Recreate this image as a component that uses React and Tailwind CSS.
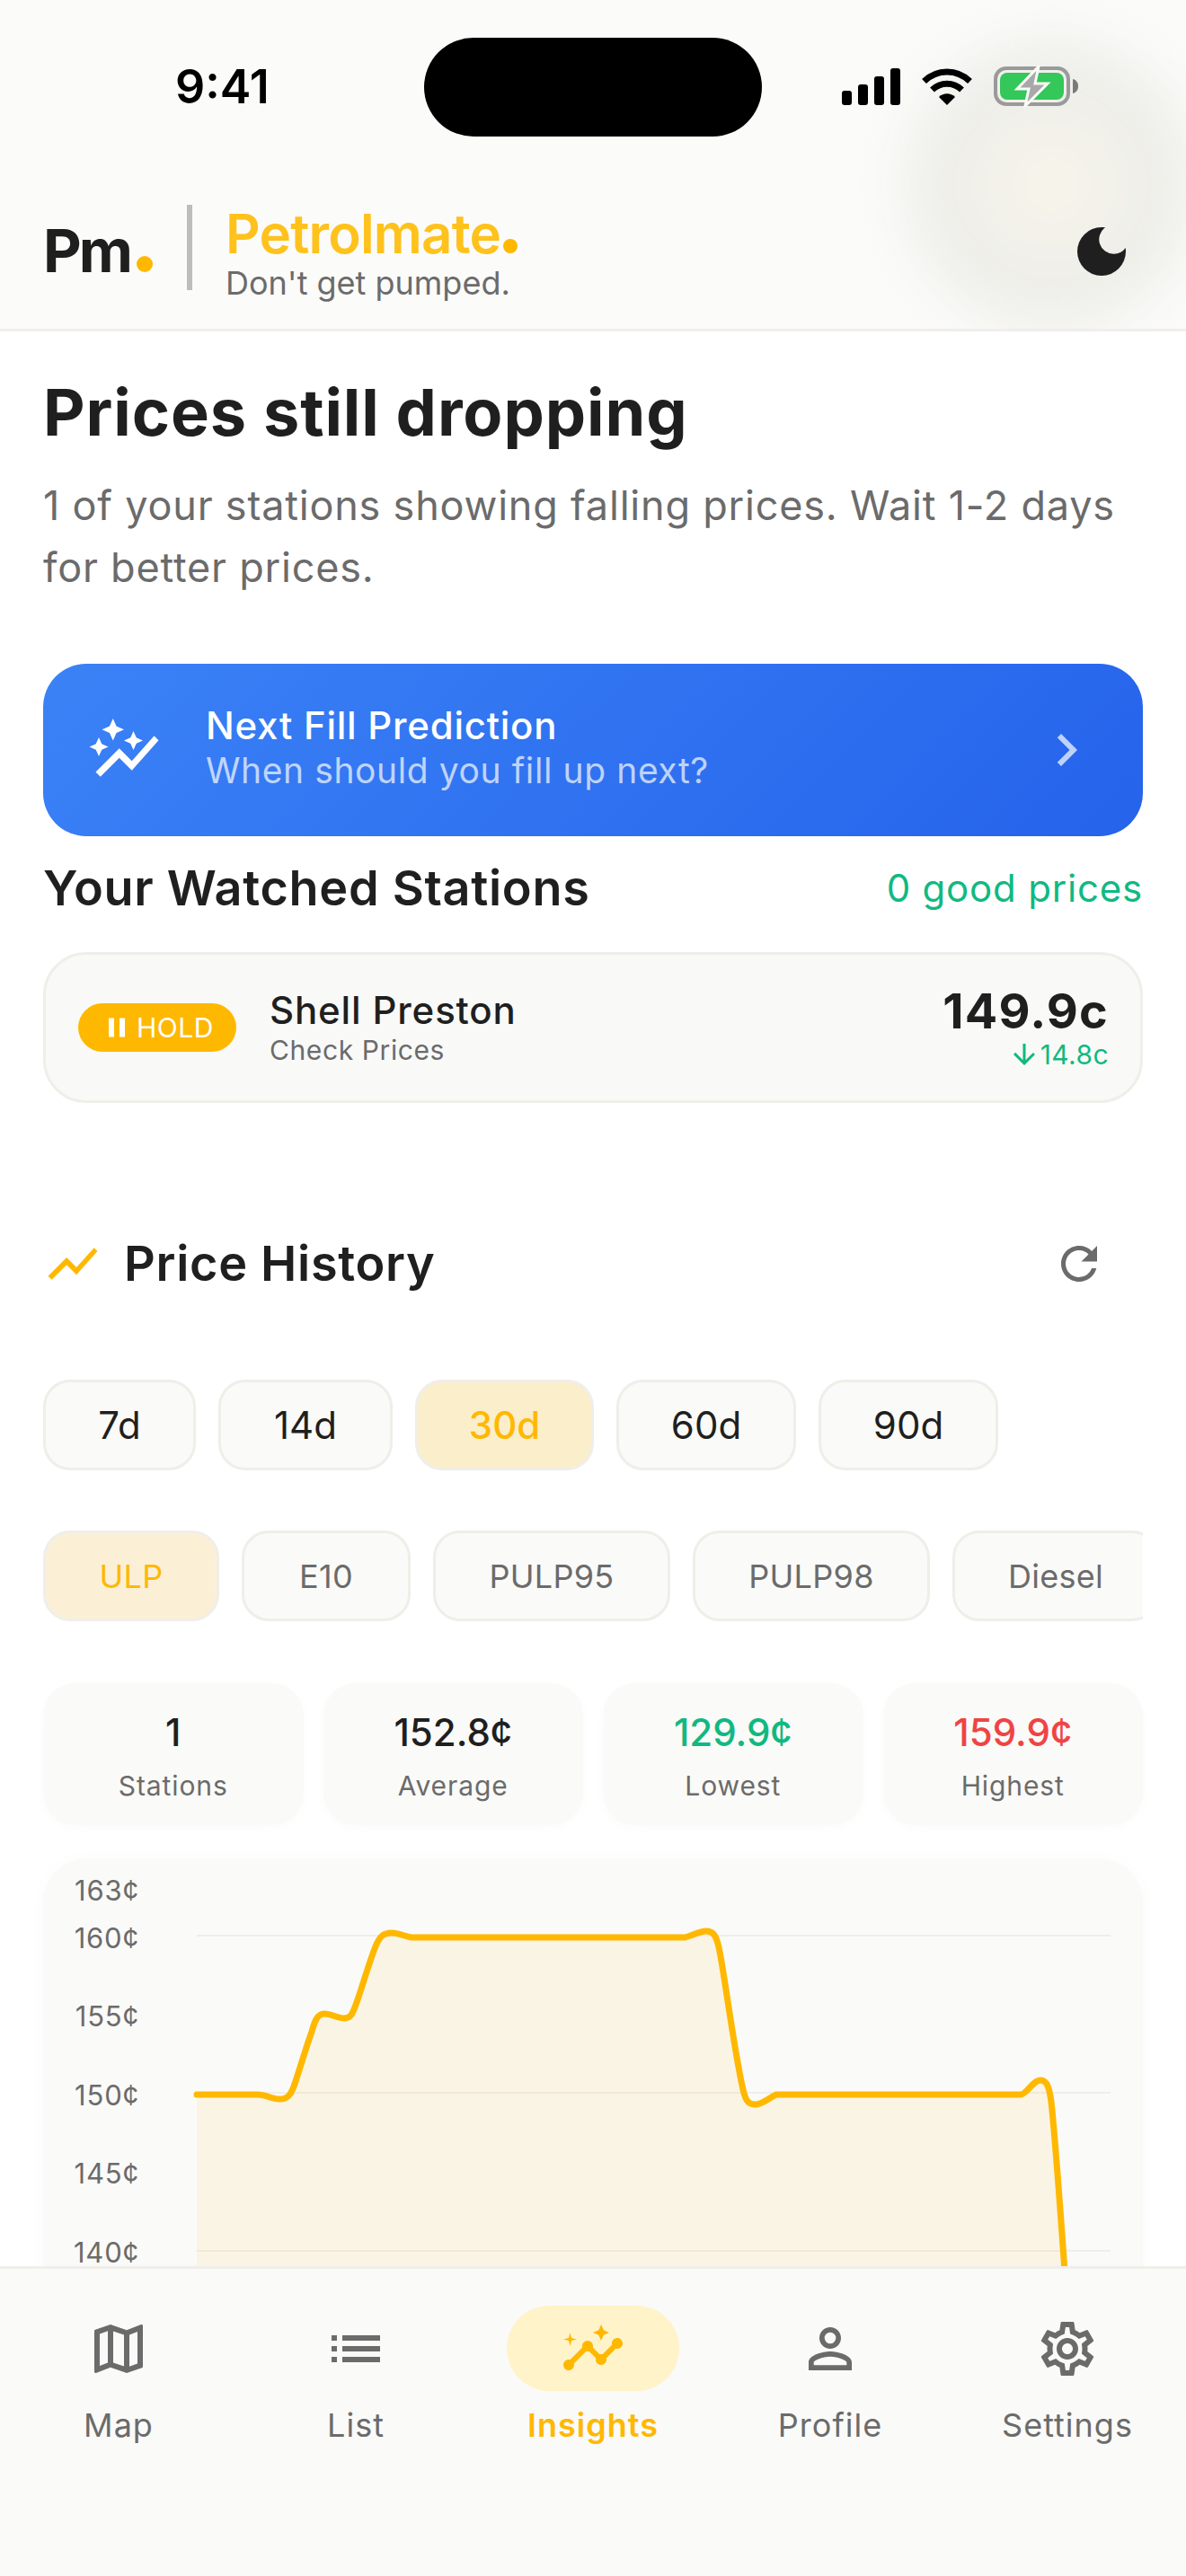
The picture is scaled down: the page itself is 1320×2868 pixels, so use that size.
import React from 'react'
import {
  MdArrowDownward,
  MdAutoGraph,
  MdChevronRight,
  MdDarkMode,
  MdInsights,
  MdList,
  MdOutlineMap,
  MdOutlineSettings,
  MdPause,
  MdPersonOutline,
  MdRefresh,
  MdShowChart,
} from 'react-icons/md'

const periods = [
  { label: '7d', w: 'w-[170px]' },
  { label: '14d', w: 'w-[194px]' },
  { label: '30d', w: 'w-[199px]', active: true },
  { label: '60d', w: 'w-[200px]' },
  { label: '90d', w: 'w-[200px]' },
]

const fuels = [
  { label: 'ULP', w: 'w-[196px]', active: true },
  { label: 'E10', w: 'w-[188px]' },
  { label: 'PULP95', w: 'w-[264px]' },
  { label: 'PULP98', w: 'w-[264px]' },
  { label: 'Diesel', w: 'w-[230px]' },
]

const stats = [
  { value: '1', label: 'Stations', color: 'text-[#1f1f1f]' },
  { value: '152.8¢', label: 'Average', color: 'text-[#1f1f1f]' },
  { value: '129.9¢', label: 'Lowest', color: 'text-[#10b981]' },
  { value: '159.9¢', label: 'Highest', color: 'text-[#ef4444]' },
]

const axis = [
  { label: '163¢', y: 2105 },
  { label: '160¢', y: 2158 },
  { label: '155¢', y: 2245 },
  { label: '150¢', y: 2333 },
  { label: '145¢', y: 2420 },
  { label: '140¢', y: 2508 },
]

const linePath =
  'M219 2332 L287 2332 C296 2332 302 2337 311 2337 C320 2337 323 2333 327 2323 C333 2306 341 2278 347 2262 C350 2251 353 2242 361 2242 C368 2242 376 2247 383 2247 C390 2247 392 2243 396 2232 C402 2216 411 2184 418 2167 C422 2157 426 2152 436 2152 C444 2152 450 2156 458 2157 L761 2157 C768 2157 777 2150 786 2150 C794 2150 797 2155 800 2168 C806 2195 815 2270 826 2322 C829 2337 832 2343 840 2343 C849 2343 855 2336 864 2332 L1136 2332 C1142 2332 1150 2316 1158 2316 C1166 2316 1168 2326 1170 2340 C1175 2385 1181 2470 1190 2600'

const tabs = [
  { label: 'Map', Icon: MdOutlineMap },
  { label: 'List', Icon: MdList },
  { label: 'Insights', Icon: MdInsights, active: true },
  { label: 'Profile', Icon: MdPersonOutline },
  { label: 'Settings', Icon: MdOutlineSettings },
]

const StatusIcons = () => (
  <div className="flex items-center">
    <svg width="65" height="41" viewBox="0 0 65 41" className="mt-[-2px]">
      <rect x="0" y="25" width="11" height="16" rx="3" fill="#000" />
      <rect x="18" y="18" width="11" height="23" rx="3" fill="#000" />
      <rect x="36" y="9" width="11" height="32" rx="3" fill="#000" />
      <rect x="54" y="0" width="11" height="41" rx="3" fill="#000" />
    </svg>
    <svg width="58" height="42" viewBox="0 0 58 42" className="ml-[23px] mt-[-2px]">
      <path d="M3.5 15.5 C18 1.5 40 1.5 54.5 15.5" fill="none" stroke="#000" strokeWidth="7" />
      <path d="M12.5 25 C22 16 36 16 45.5 25" fill="none" stroke="#000" strokeWidth="7" />
      <path d="M20 33 C25 28 33 28 38 33 L29 42 Z" fill="#000" />
    </svg>
    <svg width="94" height="46" viewBox="0 0 94 46" className="ml-[23px] mt-[-2px]">
      <rect x="2" y="3" width="81" height="40" rx="12" fill="none" stroke="#9a9a9a" strokeWidth="4" />
      <rect x="7" y="8" width="71" height="30" rx="8" fill="#34c759" />
      <path d="M88 15 C92 16 94 19 94 23 C94 27 92 30 88 31 Z" fill="#7a7a7a" />
      <path d="M50 1 L26 26 L39 26 L35 45 L60 20 L46 20 Z" fill="#a8a8a8" stroke="#fbfbf9" strokeWidth="3" />
    </svg>
  </div>
)

const App = () => {
  return (
    <div className="w-[1320px] h-[2868px] flex flex-col overflow-hidden bg-white font-['Inter',sans-serif] [font-optical-sizing:none] text-[#1f1f1f]">
      {/* header */}
      <header className="relative shrink-0 h-[369px] bg-[#fbfbf9] border-b-[3px] border-[#f1eeea] overflow-hidden">
        <div className="absolute left-[1000px] top-[35px] w-[340px] h-[340px] rounded-full blur-[24px] bg-[radial-gradient(circle,#f9f6e9_0%,#f2f1ea_25%,#eeeeea_55%,#f4f4f0_75%,#fbfbf9_100%)]" />
        <div className="relative flex items-center pt-[42px]">
          <div className="w-[472px] pl-[195px] text-[52px] leading-[60px] font-semibold text-black">9:41</div>
          <div className="w-[376px] h-[110px] rounded-full bg-black" />
          <div className="pl-[89px]">
            <StatusIcons />
          </div>
        </div>
        <div className="relative flex items-center h-[95px] mt-[76px] pl-[48px] pr-[58px]">
          <div className="flex items-baseline w-[124px] mt-[6px] text-[66px] font-bold tracking-[-3px] leading-none">
            Pm<span className="w-[18px] h-[18px] ml-[7px] rounded-full bg-[#ffb800]" />
          </div>
          <div className="w-[6px] h-[95px] ml-[36px] bg-[#bdbdbd]" />
          <div className="ml-[37px] mt-[12px]">
            <div className="flex items-baseline text-[60px] leading-[66px] font-semibold tracking-[-0.8px] text-[#ffc21c]">
              Petrolmate<span className="w-[16px] h-[16px] ml-[3px] rounded-full bg-[#ffb800]" />
            </div>
            <div className="text-[36px] leading-[44px] text-[#6b6b6b]">Don't get pumped.</div>
          </div>
          <MdDarkMode size={72} className="ml-auto mt-[8px] text-[#1f1f1f]" />
        </div>
      </header>

      {/* page content, cut off by the tab bar */}
      <main className="flex-1 min-h-0 overflow-hidden px-[48px]">
        <h1 className="mt-[48px] text-[72px] leading-[84px] font-[650] tracking-[0.9px]">Prices still dropping</h1>
        <p className="mt-[27px] text-[45px] leading-[69px] tracking-[0.8px] text-[#6b6b6b]">
          1 of your stations showing falling prices. Wait 1-2 days for better prices.
        </p>

        <div className="flex items-center h-[192px] mt-[73px] pl-[48px] pr-[49px] rounded-[48px] bg-[linear-gradient(135deg,#3b82f6,#2563eb)] text-white">
          <MdAutoGraph size={84} className="shrink-0" />
          <div className="ml-[49px] mb-[7px]">
            <div className="text-[42px] leading-[52px] font-[450] tracking-[0.75px]">Next Fill Prediction</div>
            <div className="text-[39px] leading-[48px] tracking-[0.6px] text-white/70">When should you fill up next?</div>
          </div>
          <MdChevronRight size={72} className="ml-auto text-white/70" />
        </div>

        <div className="flex items-center justify-between mt-[26px]">
          <h2 className="text-[54px] leading-[64px] font-semibold tracking-[0.7px]">Your Watched Stations</h2>
          <span className="text-[42px] leading-[64px] tracking-[0.8px] text-[#10b981]">0 good prices</span>
        </div>

        <div className="flex items-center h-[168px] mt-[39px] pl-[36px] pr-[35px] rounded-[48px] border-[3px] border-[#f0eee9] bg-[#f9f9f7]">
          <div className="flex items-center justify-center w-[176px] h-[54px] rounded-[27px] bg-[#ffb800] text-white text-[30px] tracking-[0.5px]">
            <MdPause size={36} className="mr-[4px]" />
            HOLD
          </div>
          <div className="ml-[37px]">
            <div className="text-[42px] leading-[50px] font-[450] tracking-[0.85px]">Shell Preston</div>
            <div className="text-[30px] leading-[38px] tracking-[0.6px] text-[#6b6b6b]">Check Prices</div>
          </div>
          <div className="ml-auto text-right">
            <div className="text-[54px] leading-[60px] font-bold tracking-[1.2px]">149.9c</div>
            <div className="flex items-center justify-end text-[30px] leading-[30px] tracking-[0.4px] text-[#10b981]">
              <MdArrowDownward size={36} />
              14.8c
            </div>
          </div>
        </div>

        {/* price history */}
        <div className="flex items-center mt-[146px] pr-[41px]">
          <MdShowChart size={66} className="text-[#ffb800]" />
          <h2 className="ml-[24px] text-[54px] leading-[64px] font-semibold tracking-[0.7px]">Price History</h2>
          <MdRefresh size={60} className="ml-auto text-[#6b6b6b]" />
        </div>

        <div className="flex gap-[25px] mt-[96px]">
          {periods.map((p) => (
            <button
              key={p.label}
              className={`${p.w} h-[101px] rounded-[30px] border-[3px] border-[#f0eee9] text-[42px] ${
                p.active ? 'bg-[#fbeecb] text-[#ffb800] font-medium' : 'bg-[#fafaf8] text-[#1f1f1f]'
              }`}
            >
              {p.label}
            </button>
          ))}
        </div>

        <div className="flex gap-[25px] mt-[67px] overflow-hidden">
          {fuels.map((f) => (
            <button
              key={f.label}
              className={`${f.w} h-[101px] shrink-0 rounded-[30px] border-[3px] border-[#f0eee9] text-[36px] tracking-[0.3px] ${
                f.active ? 'bg-[#fbf0d6] text-[#ffb800]' : 'bg-[#fafaf8] text-[#6b6b6b]'
              }`}
            >
              {f.label}
            </button>
          ))}
        </div>

        <div className="grid grid-cols-4 gap-[22px] mt-[69px]">
          {stats.map((s) => (
            <div
              key={s.label}
              className="flex flex-col items-center h-[158px] pt-[30px] rounded-[36px] bg-[#fafaf8] shadow-[0_3px_12px_rgba(0,0,0,0.02)]"
            >
              <div className={`text-[42px] leading-[50px] font-medium ${s.color}`}>{s.value}</div>
              <div className="mt-[15px] text-[30px] leading-[38px] tracking-[0.9px] text-[#6b6b6b]">{s.label}</div>
            </div>
          ))}
        </div>

        <div className="mt-[38px] rounded-[48px] bg-[#fafaf8] shadow-[0_0_24px_rgba(0,0,0,0.02)]">
          <svg viewBox="48 2070 1224 600" className="block w-[1224px] h-[600px]">
            {[2155, 2330, 2506].map((y) => (
              <line key={y} x1="219" x2="1236" y1={y} y2={y} stroke="#f0eee9" strokeWidth="2" />
            ))}
            {axis.map((a) => (
              <text
                key={a.label}
                x="155"
                y={a.y + 11}
                textAnchor="end"
                fontSize="31"
                letterSpacing="0.8"
                fill="#6b6b6b"
                fontFamily="Inter, sans-serif"
              >
                {a.label}
              </text>
            ))}
            <path d={`${linePath} L219 2600 Z`} fill="#ffb800" opacity="0.08" />
            <path d={linePath} fill="none" stroke="#ffb800" strokeWidth="7" strokeLinecap="round" />
          </svg>
        </div>
      </main>

      {/* tab bar */}
      <nav className="shrink-0 h-[345px] grid grid-cols-5 border-t-[3px] border-[#f0eee9] bg-[#fafaf8]">
        {tabs.map(({ label, Icon, active }) => (
          <div key={label} className="flex flex-col items-center pt-[41px]">
            <div className={`flex items-center justify-center w-[192px] h-[95px] rounded-[48px] ${active ? 'bg-[#fff3c9]' : ''}`}>
              <Icon size={72} className={active ? 'text-[#ffb800]' : 'text-[#6b6b6b]'} />
            </div>
            <div className={`mt-[16px] text-[36px] leading-[44px] tracking-[1px] ${active ? 'font-semibold text-[#ffb800]' : 'text-[#6b6b6b]'}`}>
              {label}
            </div>
          </div>
        ))}
      </nav>
    </div>
  )
}

export default App
